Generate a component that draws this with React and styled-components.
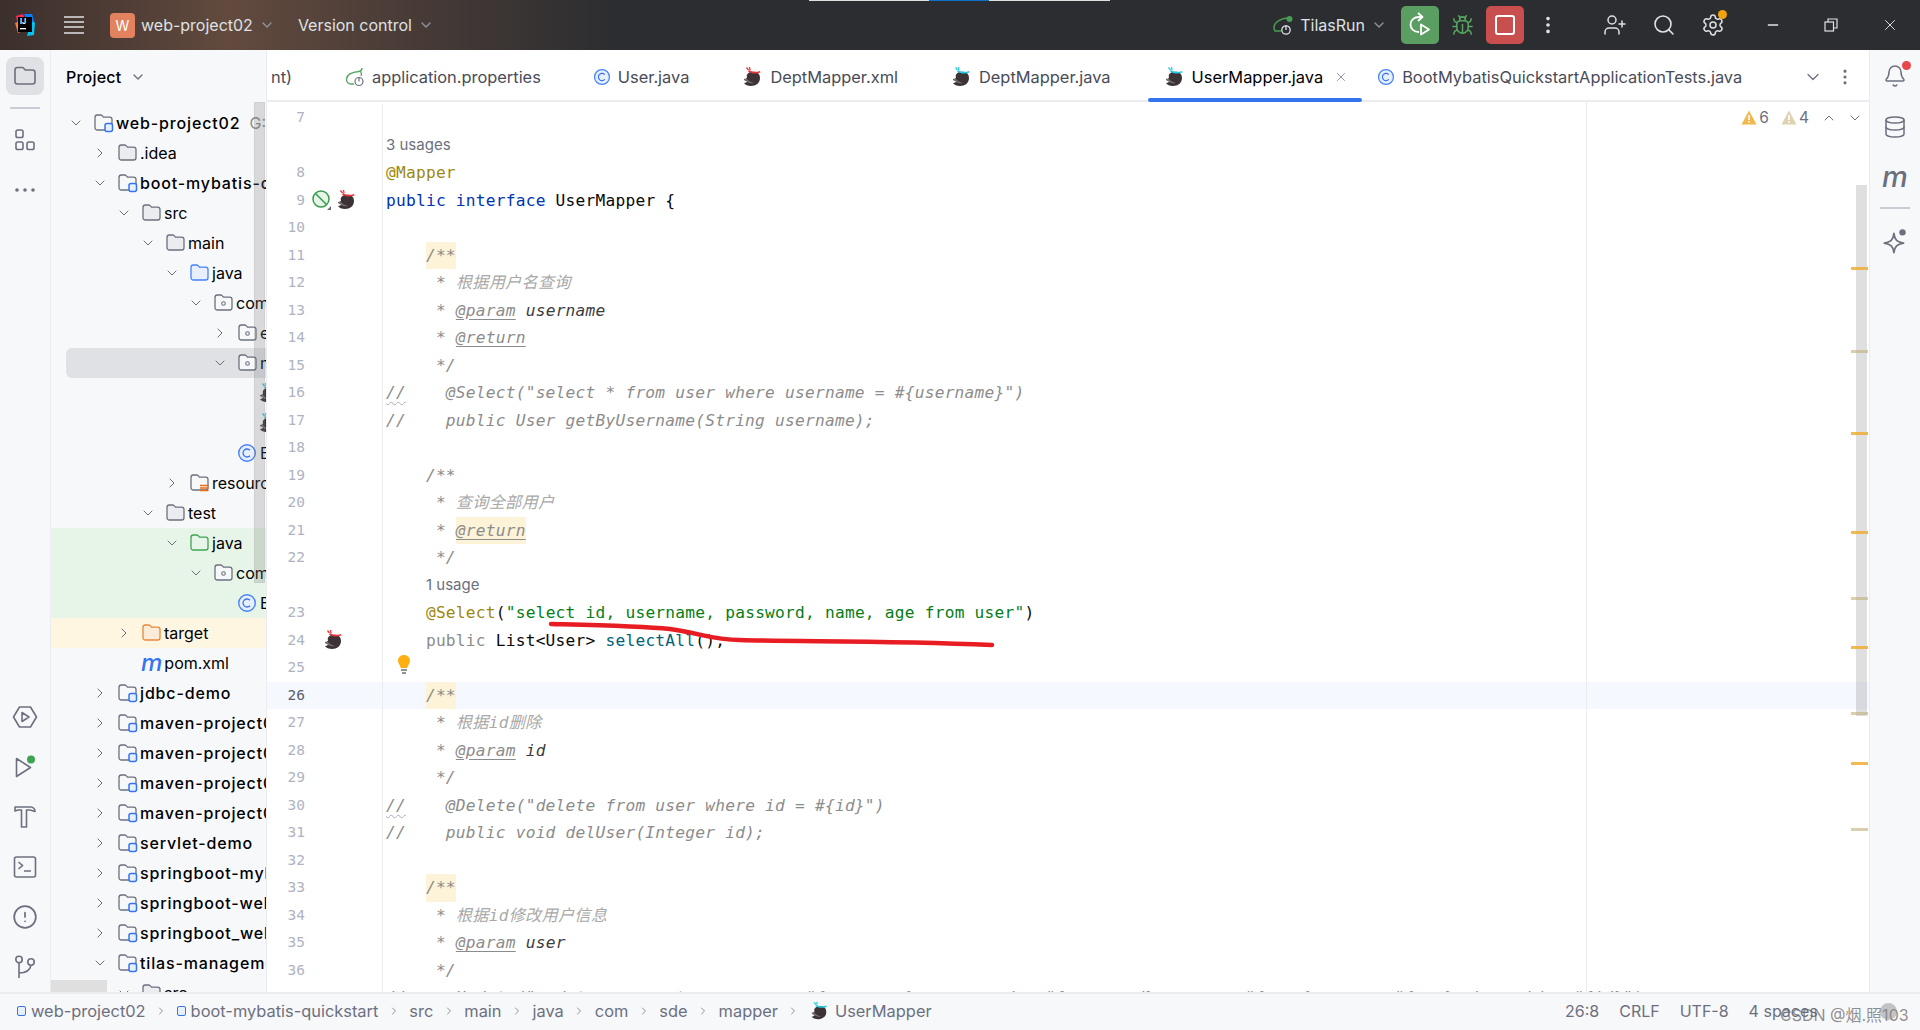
import styled, { createGlobalStyle } from 'styled-components';
import { Bell, Bug, ChevronDown, ChevronRight, ChevronUp, CircleAlert, Database, EllipsisVertical, Minus, Search, Settings, UserPlus, X } from 'lucide-react';

const GlobalStyle = createGlobalStyle`
  html, body { margin: 0; padding: 0; background: #fff; }
  body { font-family: Inter, "Noto Sans CJK SC", sans-serif; }
`;

const FolderSvg = ({ stroke = '#6c707e', fill = '#ebecf0', children }) => (
  <svg width="21" height="21" viewBox="0 0 21 21" fill="none">
    <path d="M2 5.500C2 4.100 3 3 4.300 3h3.400c.6 0 1 .2 1.400.6l1.400 1.600h6.200c1.300 0 2.300 1 2.300 2.300v8.200c0 1.300-1 2.300-2.300 2.300H4.300c-1.300 0-2.300-1-2.300-2.300z" fill={fill} stroke={stroke} strokeWidth="1.300" />
    {children}
  </svg>
);

const ModuleFolder = () => (
  <FolderSvg fill="#f7f8fa">
    <rect x="12" y="11.500" width="7.500" height="8" rx="2" fill="#e7effd" stroke="#3574f0" strokeWidth="1.500" />
  </FolderSvg>
);

const PackageFolder = () => (
  <FolderSvg fill="#f7f8fa">
    <circle cx="10.500" cy="11.500" r="1.800" stroke="#6c707e" strokeWidth="1.100" />
  </FolderSvg>
);

const ResourceFolder = () => (
  <FolderSvg fill="#f7f8fa">
    <path d="M11 13.500h8.500M11 16h8.500M11 18.500h8.500" stroke="#e66d17" strokeWidth="1.500" />
  </FolderSvg>
);

const ClassIcon = ({ size = 20 }) => (
  <svg width={size} height={size} viewBox="0 0 20 20" fill="none">
    <circle cx="10" cy="10" r="8.300" fill="#e7effd" stroke="#4682fa" strokeWidth="1.400" />
    <path d="M13 7.300a4 4 0 1 0 0 5.400" stroke="#3574f0" strokeWidth="1.300" />
  </svg>
);

const BirdIcon = ({ band = '#e8323c', size = 22 }) => (
  <svg width={size} height={size} viewBox="0 0 22 22" fill="none">
    <path d="M9 6c5-1 10 0 10 6 0 5-4 8-9 8-3 0-6-1-7-3 2 0 3-1 3-2-2 0-3-1-3-2 2 0 3-1 3-2-1-2 1-4 3-5z" fill="#3b3335" />
    <path d="M3 13c2 3 6 5 10 4-3-1-6-2-7-4z" fill="#77706f" />
    <path d="M7 5.500C11 8 15 8 19.500 6.500L19 5C15 6.500 11 6 8 4z" fill={band} />
    <path d="M5.500 1.500l2 2.500M8.500 1l.5 3" stroke={band} strokeWidth="1.300" />
  </svg>
);

const SpringIcon = () => (
  <svg width="20" height="20" viewBox="0 0 20 20" fill="none">
    <path d="M17 1c0 2-1 3-3 3.500C8 5 2 7 1.500 12c-.3 3 2 5 4.500 5h3" stroke="#59a869" strokeWidth="1.400" />
    <path d="M15.500 4c1 2 1 4 .5 5" stroke="#59a869" strokeWidth="1.400" />
    <circle cx="14" cy="14.500" r="4" stroke="#6c707e" strokeWidth="1.200" />
    <path d="M14 10.500v4" stroke="#6c707e" strokeWidth="1.200" />
  </svg>
);

const Logo = () => (
  <svg width="22" height="24" viewBox="0 0 22 24">
    <path d="M2 3 9 1l3 6-8 6z" fill="#fe2857" />
    <path d="M10 1h8l3 10-6 1z" fill="#087cfa" />
    <path d="M1 10l7-3 1 11-5 2z" fill="#fe7c2c" />
    <path d="M17 8l4 2-1 12-7 1z" fill="#07c3f2" />
    <rect x="4" y="4" width="14" height="15" fill="#000" />
    <text x="6" y="11" fontSize="7" fontWeight="700" fontFamily="Inter" fill="#fff">IJ</text>
    <rect x="6" y="15" width="6" height="1.300" fill="#fff" />
  </svg>
);

const Hamburger = () => (
  <svg width="20" height="20" viewBox="0 0 20 20" stroke="#dfe1e5" strokeWidth="1.600">
    <path d="M0 2h20M0 7h20M0 12h20M0 18h20" />
  </svg>
);

const StripeFolder = () => (
  <svg width="24" height="24" viewBox="0 0 24 24" fill="none" stroke="#6c707e" strokeWidth="1.600">
    <path d="M2 6c0-1.500 1-2.500 2.500-2.500h4.700c.6 0 1.100.2 1.500.7l1.600 1.800h7.200c1.500 0 2.500 1 2.500 2.500v9c0 1.500-1 2.500-2.500 2.500h-15C3 20 2 19 2 17.500z" />
  </svg>
);

const StructureIcon = () => (
  <svg width="22" height="24" viewBox="0 0 22 24" fill="none" stroke="#6c707e" strokeWidth="1.600">
    <rect x="2" y="2" width="7" height="7.500" rx="1.800" />
    <rect x="2" y="14" width="7" height="7.500" rx="1.800" />
    <rect x="13" y="14" width="7" height="7.500" rx="1.800" />
  </svg>
);

const EllipsisIcon = () => (
  <svg width="22" height="6" viewBox="0 0 22 6" fill="#6c707e">
    <circle cx="3" cy="3" r="1.800" />
    <circle cx="11" cy="3" r="1.800" />
    <circle cx="19" cy="3" r="1.800" />
  </svg>
);

const ServicesIcon = () => (
  <svg width="26" height="24" viewBox="0 0 26 24" fill="none" stroke="#6c707e" strokeWidth="1.600">
    <path d="M7.500 2h11l6 10-6 10h-11l-6-10z" strokeLinejoin="round" />
    <path d="M10 7.500l7 4.500-7 4.500z" strokeLinejoin="round" />
  </svg>
);

const RunStripeIcon = () => (
  <svg width="24" height="24" viewBox="0 0 24 24" fill="none">
    <path d="M3.500 3.500l14 9-14 9z" stroke="#6c707e" strokeWidth="1.600" strokeLinejoin="round" />
    <circle cx="18" cy="4.500" r="4" fill="#3fa452" />
  </svg>
);

const BuildIcon = () => (
  <svg width="24" height="24" viewBox="0 0 24 24" fill="none" stroke="#6c707e" strokeWidth="1.600" strokeLinejoin="round">
    <path d="M2 2h16c2 0 4 2 4 4.500l-5-1.500h-3.500v17h-5V5H5L2 6z" />
  </svg>
);

const TerminalIcon = () => (
  <svg width="24" height="22" viewBox="0 0 24 22" fill="none" stroke="#6c707e" strokeWidth="1.600">
    <rect x="1.500" y="1" width="21" height="20" rx="2" />
    <path d="M5.500 6l4 3.500-4 3.500M11 15h7" />
  </svg>
);

const GitIcon = () => (
  <svg width="22" height="24" viewBox="0 0 22 24" fill="none" stroke="#6c707e" strokeWidth="1.600">
    <circle cx="5" cy="4.500" r="3.200" />
    <circle cx="17" cy="7" r="3.200" />
    <path d="M5 8v15M5 18c7 0 11-2 12-7.800" />
  </svg>
);

const RerunIcon = () => (
  <svg width="26" height="26" viewBox="0 0 26 26" fill="none" stroke="#fff" strokeWidth="1.800" strokeLinejoin="round">
    <path d="M12 20C7 20 3.500 17 3.500 12.500S7 5 12 5h3" />
    <path d="M11 1l4.500 4L11 9" />
    <path d="M14 12.500l8 5-8 5z" />
  </svg>
);

const RunConfigIcon = () => (
  <svg width="22" height="22" viewBox="0 0 22 22" fill="none">
    <path d="M17 4c-6 0-15 3-15 10 0 1 .5 2 1 3h6" stroke="#499c54" strokeWidth="1.500" />
    <circle cx="17.500" cy="5" r="3" fill="#499c54" />
    <circle cx="14" cy="16" r="4.200" stroke="#dfe1e5" strokeWidth="1.300" />
    <path d="M14 11.500v4.500" stroke="#dfe1e5" strokeWidth="1.300" />
  </svg>
);

const RestoreIcon = () => (
  <svg width="14" height="14" viewBox="0 0 14 14" fill="none" stroke="#dfe1e5" strokeWidth="1.200">
    <rect x="1" y="4" width="8.500" height="9" />
    <path d="M4 4V1h9v9h-3.500" />
  </svg>
);

const NoEntryIcon = () => (
  <svg width="22" height="22" viewBox="0 0 22 22" fill="none" stroke="#3a9b4d" strokeWidth="1.500">
    <circle cx="10" cy="10" r="8" fill="#e6f5e7" />
    <path d="M4.500 4.500l11 11" />
    <path d="M16 21l4-4v4z" fill="#6c707e" stroke="none" />
  </svg>
);

const BulbIcon = () => (
  <svg width="14" height="20" viewBox="0 0 14 20">
    <path d="M7 0c3.500 0 6 2.600 6 5.800 0 2.900-2.200 4-2.800 7.200H3.800C3.200 9.800 1 8.700 1 5.800 1 2.600 3.500 0 7 0z" fill="#ffaf0f" />
    <path d="M4 15h6M5 18h4" stroke="#6c707e" strokeWidth="1.600" />
  </svg>
);

const WarnTriangle = ({ color }) => (
  <svg width="16" height="15" viewBox="0 0 16 15">
    <path d="M8 .5l7.500 14H.5z" fill={color} />
    <rect x="7.200" y="5" width="1.600" height="5" fill="#fff" />
    <rect x="7.200" y="11" width="1.600" height="1.600" fill="#fff" />
  </svg>
);

const StarIcon = () => (
  <svg width="28" height="30" viewBox="0 0 26 28" fill="none">
    <path d="M12 6c.6 6 3 8 9 9-6 1-8.400 3-9 9-.6-6-3-8-9-9 6-1 8.400-3 9-9z" stroke="#6c707e" strokeWidth="1.600" strokeLinejoin="round" />
    <circle cx="20" cy="5" r="3" fill="#6c707e" />
  </svg>
);

const Page = styled.div`
  position: relative;
  width: 1920px;
  height: 1030px;
  overflow: hidden;
  display: flex;
  flex-direction: column;
`;

const TitleBar = styled.header`
  position: relative;
  flex: 0 0 50px;
  box-sizing: border-box;
  display: flex;
  align-items: center;
  padding: 0 18px 0 14px;
  color: #dfe1e5;
  font-size: 16px;
  background: linear-gradient(90deg, #3b2f2c 0, #624a3e 230px, #4a3c37 400px, #2b2d30 620px);
`;

const ScreenEdge = styled.div`
  position: absolute;
  top: 0;
  left: 809px;
  width: 301px;
  height: 1px;
  background: linear-gradient(90deg, #dfdfdf 120px, #0a6fc9 120px, #0a6fc9 180px, #dfdfdf 180px);
`;

const TitleItem = styled.div`
  display: flex;
  align-items: center;
  gap: ${(p) => p.$gap || 8}px;
  margin-left: ${(p) => p.$left || 0}px;
  color: ${(p) => p.$color || '#dfe1e5'};
  white-space: nowrap;
`;

const ProjectBadge = styled.span`
  width: 25px;
  height: 25px;
  border-radius: 4px;
  background: #e2825f;
  color: #fff;
  font-size: 14px;
  display: flex;
  align-items: center;
  justify-content: center;
`;

const TitleSpacer = styled.div`
  flex: 1;
`;

const RunButton = styled.button`
  width: 38px;
  height: 38px;
  border: 0;
  border-radius: 5px;
  padding: 0;
  margin-left: ${(p) => p.$left}px;
  background: ${(p) => p.$bg};
  display: flex;
  align-items: center;
  justify-content: center;
`;

const StopSquare = styled.span`
  width: 16px;
  height: 16px;
  border: 2px solid #fff;
  border-radius: 3px;
`;

const NoticeDot = styled.span`
  position: absolute;
  top: ${(p) => p.$top}px;
  right: ${(p) => p.$right}px;
  width: ${(p) => p.$size}px;
  height: ${(p) => p.$size}px;
  border-radius: 50%;
  background: ${(p) => p.$bg};
`;

const IconHolder = styled.span`
  position: relative;
  display: flex;
  width: 24px;
  height: 24px;
  align-items: center;
  justify-content: center;
  margin-left: ${(p) => p.$left || 0}px;
`;

const Body = styled.div`
  flex: 1;
  display: flex;
  min-height: 0;
`;

const Stripe = styled.aside`
  flex: 0 0 51px;
  box-sizing: border-box;
  display: flex;
  flex-direction: column;
  align-items: center;
  background: #f7f8fa;
  ${(p) => (p.$right ? 'border-left: 1px solid #ebecf0;' : 'border-right: 1px solid #ebecf0;')}
  padding: 7px 0 6px;
  color: #6c707e;
`;

const StripeButton = styled.div`
  position: relative;
  width: 38px;
  height: 38px;
  flex: 0 0 38px;
  margin-top: ${(p) => p.$top || 0}px;
  border-radius: 8px;
  background: ${(p) => (p.$active ? '#dfe1e5' : 'transparent')};
  display: flex;
  align-items: center;
  justify-content: center;
`;

const StripeRule = styled.div`
  width: 30px;
  height: 2px;
  margin-top: ${(p) => p.$top}px;
  flex: 0 0 2px;
  background: #c9ccd6;
`;

const StripeGap = styled.div`
  flex: 1;
`;

const MavenMark = styled.span`
  font: italic 500 ${(p) => p.$size}px Inter, sans-serif;
  color: ${(p) => p.$color};
  line-height: 1;
`;

const ProjectPanel = styled.section`
  position: relative;
  flex: 0 0 216px;
  box-sizing: border-box;
  background: #f7f8fa;
  border-right: 1px solid #ebecf0;
  overflow: hidden;
`;

const PanelHeader = styled.div`
  height: 52px;
  padding: 1px 0 0 15px;
  box-sizing: border-box;
  display: flex;
  align-items: center;
  gap: 9px;
  font-size: 16px;
  font-weight: 500;
  letter-spacing: 0.2px;
  color: #000;
  margin-bottom: 5.500px;
`;

const TreeRow = styled.div`
  position: relative;
  height: 30px;
  box-sizing: border-box;
  display: flex;
  align-items: center;
  padding-left: ${(p) => 16 + p.$level * 24}px;
  white-space: nowrap;
  font-size: 16px;
  color: #000;
  background: ${(p) => p.$bg || 'transparent'};
`;

const RowSelection = styled.div`
  position: absolute;
  top: 0;
  bottom: 0;
  left: 15px;
  right: -8px;
  border-radius: 6px;
  background: #dfe1e5;
`;

const TreeArrow = styled.span`
  position: relative;
  flex: 0 0 18px;
  display: flex;
  justify-content: center;
  color: #6c707e;
`;

const TreeIcon = styled.span`
  position: relative;
  flex: 0 0 21px;
  height: 21px;
  margin-left: 8px;
  margin-right: 2px;
  display: flex;
  align-items: center;
`;

const TreeLabel = styled.span`
  position: relative;
  font-weight: ${(p) => (p.$module ? 500 : 400)};
  letter-spacing: ${(p) => (p.$module ? '0.85px' : '0')};
`;

const TreeHint = styled.span`
  color: #8c8c8c;
  margin-left: 9px;
`;

const PanelScroll = styled.div`
  position: absolute;
  top: 52px;
  left: 203px;
  width: 11px;
  height: 481px;
  background: rgba(120, 120, 120, 0.24);
  border: 1px solid rgba(120, 120, 120, 0.08);
  box-sizing: border-box;
`;

const PanelHScroll = styled.div`
  position: absolute;
  left: 0;
  bottom: 0;
  width: 56px;
  height: 12px;
  background: #dfdfdf;
`;

const Editor = styled.main`
  flex: 1;
  min-width: 0;
  display: flex;
  flex-direction: column;
  background: #fff;
`;

const TabBar = styled.nav`
  flex: 0 0 52px;
  box-sizing: border-box;
  display: flex;
  align-items: center;
  position: relative;
  border-bottom: 2px solid #ebecf0;
  padding-left: 4px;
  font-size: 16.400px;
  color: #494b57;
  white-space: nowrap;
`;

const CutTab = styled.span`
  width: 59px;
  padding-top: 4px;
`;

const Tab = styled.div`
  position: relative;
  height: 50px;
  box-sizing: border-box;
  display: flex;
  align-items: center;
  gap: 7px;
  padding: 4px ${(p) => (p.$active ? 14 : 37)}px 0 15px;
  color: ${(p) => (p.$active ? '#000' : '#494b57')};
`;

const TabClose = styled(X)`
  margin-left: 4px;
`;

const TabUnderline = styled.div`
  position: absolute;
  left: 0;
  right: 0;
  bottom: -2px;
  height: 4px;
  border-radius: 2px;
  background: #3574f0;
`;

const TabTools = styled.div`
  position: absolute;
  top: 2px;
  right: 0;
  height: 50px;
  display: flex;
  align-items: center;
  gap: 12px;
  padding-right: 14px;
  color: #6c707e;
`;

const CodeArea = styled.div`
  position: relative;
  flex: 1;
  min-height: 0;
  overflow: hidden;
  padding-top: 2px;
`;

const CodeRow = styled.div`
  position: relative;
  height: 27.500px;
  display: flex;
  background: ${(p) => (p.$current ? '#f5f8fe' : 'transparent')};
`;

const LineNo = styled.span`
  flex: 0 0 38px;
  text-align: right;
  font: 14.500px/27.500px "DejaVu Sans Mono", monospace;
  color: ${(p) => (p.$current ? '#5a5d6b' : '#aeb3c2')};
`;

const GutterCell = styled.span`
  flex: 0 0 77px;
  box-sizing: border-box;
  display: flex;
  align-items: center;
  gap: 2px;
  padding-left: ${(p) => p.$pad || 0}px;
`;

const CodeText = styled.code`
  flex: 1;
  min-width: 0;
  box-sizing: border-box;
  border-left: 1px solid #ebecf0;
  padding-left: 3px;
  white-space: pre;
  font: 16.200px/27.500px "DejaVu Sans Mono", "Noto Sans CJK SC", monospace;
  letter-spacing: 0.230px;
  color: #080808;
`;

const Hint = styled.span`
  display: inline-block;
  margin-left: ${(p) => (p.$indent ? 40 : 0)}px;
  padding-bottom: 2px;
  vertical-align: top;
  font: 15px/25.500px Inter, sans-serif;
  letter-spacing: 0;
  color: #6c707e;
`;

const Keyword = styled.span`
  color: #0033b3;
`;

const Annotation = styled.span`
  color: #9e880d;
`;

const Str = styled.span`
  color: #067d17;
`;

const Method = styled.span`
  color: #00627a;
`;

const Muted = styled.span`
  color: #8c8c8c;
`;

const Comment = styled.span`
  color: #8c8c8c;
  font-style: italic;
`;

const DocText = styled.span`
  color: #a9a9a9;
  font-style: italic;
`;

const DocTag = styled.span`
  color: #8c8c8c;
  font-style: italic;
  text-decoration: underline;
  text-underline-offset: 3px;
`;

const DocParam = styled.span`
  color: #3d3d3d;
  font-style: italic;
`;

const Warned = styled.span`
  display: inline-block;
  height: 27.500px;
  vertical-align: top;
  background: #fdf3d8;
`;

const Squiggle = styled.span`
  text-decoration: underline wavy #a8adbd 1px;
  text-underline-offset: 3px;
`;

const BulbSlot = styled.span`
  position: absolute;
  left: 130px;
  top: 1px;
`;

const MarginLine = styled.div`
  position: absolute;
  top: 0;
  bottom: 0;
  left: 1319px;
  width: 1px;
  background: #ebecf0;
`;

const Inspection = styled.div`
  position: absolute;
  top: 6px;
  right: 6px;
  display: flex;
  align-items: center;
  gap: 2px;
  font-size: 15.500px;
  color: #6c707e;
`;

const InspectionCount = styled.span`
  margin-right: ${(p) => p.$right}px;
`;

const NextChevron = styled(ChevronDown)`
  margin-left: 8px;
`;

const ScrollThumb = styled.div`
  position: absolute;
  top: 83px;
  left: 1589px;
  width: 11px;
  height: 531px;
  background: rgba(120, 120, 120, 0.24);
`;

const ErrorMark = styled.div`
  position: absolute;
  top: ${(p) => p.$top}px;
  left: 1584px;
  width: 17px;
  height: 3px;
  background: ${(p) => (p.$weak ? 'rgba(190, 175, 120, 0.6)' : 'rgba(240, 175, 50, 0.85)')};
`;

const Annotated = styled.svg`
  position: absolute;
  top: 0;
  left: 0;
  pointer-events: none;
`;

const StatusBar = styled.footer`
  position: relative;
  flex: 0 0 38px;
  box-sizing: border-box;
  display: flex;
  align-items: center;
  border-top: 2px solid #ebecf0;
  padding: 0 0 2px 17px;
  background: #f7f8fa;
  color: #6c707e;
  font-size: 16.400px;
  white-space: nowrap;
`;

const Crumb = styled.span`
  display: flex;
  align-items: center;
  gap: ${(p) => p.$gap || 0}px;
`;

const CrumbSep = styled.span`
  display: flex;
  width: 12px;
  margin: 0 9.500px;
  justify-content: center;
`;

const ModuleDot = styled.span`
  width: 7px;
  height: 8px;
  border: 1.500px solid #3574f0;
  border-radius: 2px;
  background: #e7effd;
`;

const StatusRight = styled.div`
  position: absolute;
  top: 0;
  bottom: 2px;
  left: 1565px;
  display: flex;
  align-items: center;
  gap: 20px;
  font-size: 16px;
`;

const Watermark = styled.div`
  position: absolute;
  top: 8px;
  left: 1780px;
  font-size: 16px;
  color: rgba(95, 95, 95, 0.7);
`;

const WatermarkDot = styled.div`
  position: absolute;
  left: 1880px;
  top: 9px;
  width: 17px;
  height: 17px;
  border-radius: 50%;
  background: rgba(130, 130, 130, 0.45);
`;

const mapperBlue = '#22c9e0';

const tree = [
  { level: 0, open: true, icon: 'module', label: 'web-project02', module: true, hint: 'G:' },
  { level: 1, open: false, icon: 'folder', label: '.idea' },
  { level: 1, open: true, icon: 'module', label: 'boot-mybatis-quickstart', module: true },
  { level: 2, open: true, icon: 'folder', label: 'src' },
  { level: 3, open: true, icon: 'folder', label: 'main' },
  { level: 4, open: true, icon: 'java', label: 'java' },
  { level: 5, open: true, icon: 'package', label: 'com.sde' },
  { level: 6, open: false, icon: 'package', label: 'entity' },
  { level: 6, open: true, icon: 'package', label: 'mapper', selected: true },
  { level: 6.85, icon: 'bird', label: 'DeptMapper' },
  { level: 6.85, icon: 'bird', label: 'UserMapper' },
  { level: 6, icon: 'class', label: 'BootApplication', flat: true },
  { level: 4, open: false, icon: 'resource', label: 'resources' },
  { level: 3, open: true, icon: 'folder', label: 'test' },
  { level: 4, open: true, icon: 'test', label: 'java', bg: '#e6f5e7' },
  { level: 5, open: true, icon: 'package', label: 'com.sde', bg: '#e6f5e7' },
  { level: 6, icon: 'class', label: 'BootTests', bg: '#e6f5e7', flat: true },
  { level: 2, open: false, icon: 'target', label: 'target', bg: '#fef6e0' },
  { level: 2, icon: 'maven', label: 'pom.xml' },
  { level: 1, open: false, icon: 'module', label: 'jdbc-demo', module: true },
  { level: 1, open: false, icon: 'module', label: 'maven-project01', module: true },
  { level: 1, open: false, icon: 'module', label: 'maven-project02', module: true },
  { level: 1, open: false, icon: 'module', label: 'maven-project03', module: true },
  { level: 1, open: false, icon: 'module', label: 'maven-project04', module: true },
  { level: 1, open: false, icon: 'module', label: 'servlet-demo', module: true },
  { level: 1, open: false, icon: 'module', label: 'springboot-mybatis', module: true },
  { level: 1, open: false, icon: 'module', label: 'springboot-web', module: true },
  { level: 1, open: false, icon: 'module', label: 'springboot_web', module: true },
  { level: 1, open: true, icon: 'module', label: 'tilas-management', module: true },
  { level: 2, open: true, icon: 'folder', label: 'src' },
];

const treeIcon = (icon) => {
  switch (icon) {
    case 'module':
      return <ModuleFolder />;
    case 'package':
      return <PackageFolder />;
    case 'resource':
      return <ResourceFolder />;
    case 'java':
      return <FolderSvg stroke="#4682fa" fill="#e7effd" />;
    case 'test':
      return <FolderSvg stroke="#3fa452" fill="#e6f5e7" />;
    case 'target':
      return <FolderSvg stroke="#e6883a" fill="#fdebd9" />;
    case 'class':
      return <ClassIcon />;
    case 'bird':
      return <BirdIcon band={mapperBlue} />;
    case 'maven':
      return <MavenMark $size={24} $color="#3574f0">m</MavenMark>;
    default:
      return <FolderSvg />;
  }
};

const doc = (text) => <>     <Muted>*</Muted> <DocText>{text}</DocText></>;
const docTag = (tag, param, warn) => (
  <>
    {'     '}<Muted>*</Muted>{' '}
    {warn ? <Warned><DocTag>{tag}</DocTag></Warned> : <DocTag>{tag}</DocTag>}
    {param && <DocParam> {param}</DocParam>}
  </>
);
const docOpen = (warn) => (
  <>
    {'    '}
    {warn ? <Warned><Comment>/**</Comment></Warned> : <Comment>/**</Comment>}
  </>
);
const docEnd = <>     <Comment>*/</Comment></>;

const lines = [
  { n: 7 },
  { code: <Hint>3 usages</Hint> },
  { n: 8, code: <Annotation>@Mapper</Annotation> },
  { n: 9, gutter: 'interface', code: <><Keyword>public interface</Keyword> UserMapper {'{'}</> },
  { n: 10 },
  { n: 11, code: docOpen(true) },
  { n: 12, code: doc('根据用户名查询') },
  { n: 13, code: docTag('@param', 'username') },
  { n: 14, code: docTag('@return') },
  { n: 15, code: docEnd },
  { n: 16, code: <Comment><Squiggle>//</Squiggle>{'    @Select("select * from user where username = #{username}")'}</Comment> },
  { n: 17, code: <Comment>{'//    public User getByUsername(String username);'}</Comment> },
  { n: 18 },
  { n: 19, code: docOpen(false) },
  { n: 20, code: doc('查询全部用户') },
  { n: 21, code: docTag('@return', null, true) },
  { n: 22, code: docEnd },
  { code: <Hint $indent>1 usage</Hint> },
  { n: 23, code: <>{'    '}<Annotation>@Select</Annotation>(<Str>"select id, username, password, name, age from user"</Str>)</> },
  { n: 24, gutter: 'method', code: <>{'    '}<Muted>public</Muted> List&lt;User&gt; <Method>selectAll</Method>();</> },
  { n: 25, bulb: true },
  { n: 26, current: true, code: docOpen(true) },
  { n: 27, code: doc('根据id删除') },
  { n: 28, code: docTag('@param', 'id') },
  { n: 29, code: docEnd },
  { n: 30, code: <Comment><Squiggle>//</Squiggle>{'    @Delete("delete from user where id = #{id}")'}</Comment> },
  { n: 31, code: <Comment>{'//    public void delUser(Integer id);'}</Comment> },
  { n: 32 },
  { n: 33, code: docOpen(true) },
  { n: 34, code: doc('根据id修改用户信息') },
  { n: 35, code: docTag('@param', 'user') },
  { n: 36, code: docEnd },
  { n: 37, code: <Comment>{'//    @Update("update user set username = #{username}, password = #{password}, name = #{name}, age = #{age} where id = #{id}")'}</Comment> },
];

const marks = [
  { top: 165 },
  { top: 248, weak: true },
  { top: 330 },
  { top: 429 },
  { top: 495, weak: true },
  { top: 544 },
  { top: 610, weak: true },
  { top: 660 },
  { top: 726, weak: true },
];

const tabs = [
  { icon: <SpringIcon />, label: 'application.properties' },
  { icon: <ClassIcon size={18} />, label: 'User.java' },
  { icon: <BirdIcon band="#e8323c" />, label: 'DeptMapper.xml' },
  { icon: <BirdIcon band={mapperBlue} />, label: 'DeptMapper.java' },
  { icon: <BirdIcon band={mapperBlue} />, label: 'UserMapper.java', active: true },
  { icon: <ClassIcon size={18} />, label: 'BootMybatisQuickstartApplicationTests.java' },
];

const crumbs = ['src', 'main', 'java', 'com', 'sde', 'mapper'];

const App = () => (
  <Page>
    <GlobalStyle />
    <TitleBar>
      <ScreenEdge />
      <Logo />
      <TitleItem $left={28}><Hamburger /></TitleItem>
      <TitleItem $left={26} $gap={6}>
        <ProjectBadge>W</ProjectBadge>
        web-project02
        <ChevronDown size={16} color="#8f939e" />
      </TitleItem>
      <TitleItem $left={23} $gap={6}>
        Version control
        <ChevronDown size={16} color="#8f939e" />
      </TitleItem>
      <TitleSpacer />
      <TitleItem $gap={6}>
        <RunConfigIcon />
        TilasRun
        <ChevronDown size={16} color="#8f939e" />
      </TitleItem>
      <RunButton $left={14} $bg="#5a9e62"><RerunIcon /></RunButton>
      <IconHolder $left={11}><Bug size={23} color="#57a65f" strokeWidth={1.600} /></IconHolder>
      <RunButton $left={12} $bg="#c94f4f"><StopSquare /></RunButton>
      <IconHolder $left={12}><EllipsisVertical size={22} color="#dfe1e5" /></IconHolder>
      <IconHolder $left={43}><UserPlus size={24} color="#dfe1e5" strokeWidth={1.500} /></IconHolder>
      <IconHolder $left={25}><Search size={24} color="#dfe1e5" strokeWidth={1.600} /></IconHolder>
      <IconHolder $left={25}>
        <Settings size={24} color="#dfe1e5" strokeWidth={1.500} />
        <NoticeDot $top={-3} $right={-2} $size={9} $bg="#f0a30a" />
      </IconHolder>
      <IconHolder $left={36}><Minus size={16} color="#dfe1e5" /></IconHolder>
      <IconHolder $left={34}><RestoreIcon /></IconHolder>
      <IconHolder $left={35}><X size={18} color="#dfe1e5" strokeWidth={1.300} /></IconHolder>
    </TitleBar>
    <Body>
      <Stripe>
        <StripeButton $active><StripeFolder /></StripeButton>
        <StripeRule $top={12} />
        <StripeButton $top={12}><StructureIcon /></StripeButton>
        <StripeButton $top={12}><EllipsisIcon /></StripeButton>
        <StripeGap />
        <StripeButton><ServicesIcon /></StripeButton>
        <StripeButton $top={12}><RunStripeIcon /></StripeButton>
        <StripeButton $top={12}><BuildIcon /></StripeButton>
        <StripeButton $top={12}><TerminalIcon /></StripeButton>
        <StripeButton $top={12}><CircleAlert size={26} strokeWidth={1.600} /></StripeButton>
        <StripeButton $top={12}><GitIcon /></StripeButton>
      </Stripe>
      <ProjectPanel>
        <PanelHeader>
          Project
          <ChevronDown size={16} color="#6c707e" />
        </PanelHeader>
        {tree.map((row, i) => (
          <TreeRow key={i} $level={row.level} $bg={row.bg}>
            {row.selected && <RowSelection />}
            <TreeArrow>
              {row.open === true && <ChevronDown size={16} strokeWidth={1.500} />}
              {row.open === false && <ChevronRight size={16} strokeWidth={1.500} />}
            </TreeArrow>
            <TreeIcon>{treeIcon(row.icon)}</TreeIcon>
            <TreeLabel $module={row.module}>{row.label}</TreeLabel>
            {row.hint && <TreeHint>{row.hint}</TreeHint>}
          </TreeRow>
        ))}
        <PanelScroll />
        <PanelHScroll />
      </ProjectPanel>
      <Editor>
        <TabBar>
          <CutTab>nt)</CutTab>
          {tabs.map((tab) => (
            <Tab key={tab.label} $active={tab.active}>
              {tab.icon}
              {tab.label}
              {tab.active && <TabClose size={14} color="#818594" strokeWidth={1.500} />}
              {tab.active && <TabUnderline />}
            </Tab>
          ))}
          <TabTools>
            <ChevronDown size={20} strokeWidth={1.500} />
            <EllipsisVertical size={20} strokeWidth={1.800} />
          </TabTools>
        </TabBar>
        <CodeArea>
          {lines.map((line, i) => (
            <CodeRow key={i} $current={line.current}>
              <LineNo $current={line.current}>{line.n}</LineNo>
              <GutterCell $pad={line.gutter === 'method' ? 17 : 6}>
                {line.gutter === 'interface' && <NoEntryIcon />}
                {line.gutter && <BirdIcon band="#e8323c" />}
              </GutterCell>
              <CodeText>{line.code}</CodeText>
              {line.bulb && <BulbSlot><BulbIcon /></BulbSlot>}
            </CodeRow>
          ))}
          <MarginLine />
          <ScrollThumb />
          {marks.map((mark) => <ErrorMark key={mark.top} $top={mark.top} $weak={mark.weak} />)}
          <Inspection>
            <WarnTriangle color="#f2b84b" />
            <InspectionCount $right={10}>6</InspectionCount>
            <WarnTriangle color="#ddd3b0" />
            <InspectionCount $right={10}>4</InspectionCount>
            <ChevronUp size={16} strokeWidth={1.500} />
            <NextChevron size={16} strokeWidth={1.500} />
          </Inspection>
          <Annotated width="1602" height="890" viewBox="267 102 1602 890" fill="none">
            <path d="M551 624 C 590 625, 640 626, 670 629 C 700 633, 712 640, 740 640 C 800 642, 880 640, 992 645" stroke="#e81c23" strokeWidth="4.500" strokeLinecap="round" />
          </Annotated>
        </CodeArea>
      </Editor>
      <Stripe $right>
        <StripeButton>
          <Bell size={24} strokeWidth={1.500} />
          <NoticeDot $top={4} $right={3} $size={9} $bg="#e5484d" />
        </StripeButton>
        <StripeButton $top={13}><Database size={24} strokeWidth={1.500} /></StripeButton>
        <StripeButton $top={11}><MavenMark $size={29} $color="#6c707e">m</MavenMark></StripeButton>
        <StripeRule $top={12} />
        <StripeButton $top={14}><StarIcon /></StripeButton>
      </Stripe>
    </Body>
    <StatusBar>
      <Crumb $gap={5}><ModuleDot />web-project02</Crumb>
      <CrumbSep><ChevronRight size={16} strokeWidth={1.500} /></CrumbSep>
      <Crumb $gap={5}><ModuleDot />boot-mybatis-quickstart</Crumb>
      {crumbs.map((crumb) => (
        <Crumb key={crumb}>
          <CrumbSep><ChevronRight size={16} strokeWidth={1.500} /></CrumbSep>
          {crumb}
        </Crumb>
      ))}
      <CrumbSep><ChevronRight size={16} strokeWidth={1.500} /></CrumbSep>
      <Crumb $gap={6}><BirdIcon band={mapperBlue} size={20} />UserMapper</Crumb>
      <StatusRight>
        <span>26:8</span>
        <span>CRLF</span>
        <span>UTF-8</span>
        <span>4 spaces</span>
      </StatusRight>
      <Watermark>CSDN @烟.照103</Watermark>
      <WatermarkDot />
    </StatusBar>
  </Page>
);

export default App;
